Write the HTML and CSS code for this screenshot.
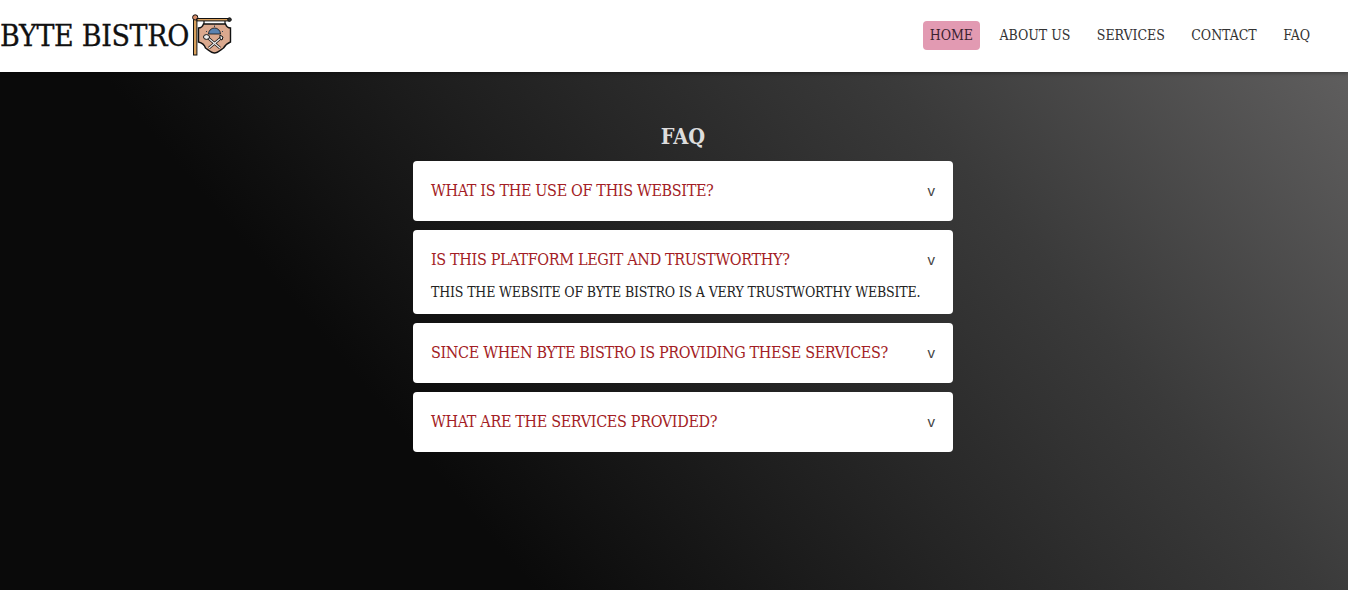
FILE: index.html
```html
<html><head>
<title>Byte Bistro - FAQ</title>
<link rel="stylesheet" href="styles.css">
</head>
<body>
<div class="navbar">
	<a class="brand" href="#">BYTE BISTRO<svg class="logo" viewBox="0 0 40 42" width="40" height="42">
		<rect x="1.5" y="2" width="3.4" height="39" fill="#d9a05b" stroke="#111" stroke-width="1"/>
		<circle cx="3.2" cy="3.4" r="2.6" fill="#d98f6b" stroke="#111" stroke-width="1"/>
		<rect x="5" y="4.500" width="32" height="2.400" fill="#d9a05b" stroke="#111" stroke-width="1"/>
		<circle cx="37.500" cy="5.600" r="1.800" fill="#333" stroke="#111" stroke-width="1"/>
		<path d="M12 7v3M33 7v3" stroke="#111" stroke-width="1.200"/>
		<path d="M6.500 14c2 0 4-1 5-4h22c1 3 3 4 5 4v14c-3 1-5 3-7 6-3 2-6 5-9 5s-6-3-9-5c-1-3-3-5-7-6z" fill="#dba98e" stroke="#111" stroke-width="1.400"/>
		<path d="M16.500 20a6 6 0 0 1 12 0z" fill="#5b83b0" stroke="#111" stroke-width=".8"/>
		<path d="M14 18l1-1M31 18l-1-1M22.500 11.500v1.500" stroke="#345" stroke-width="1"/>
		<path d="M15 23l13 11M30 23l-13 11" stroke="#111" stroke-width="2.800"/>
		<path d="M15 23l13 11M30 23l-13 11" stroke="#eee" stroke-width="1.200"/>
		<ellipse cx="14.500" cy="23" rx="3" ry="2.400" fill="#eee" stroke="#111"/>
		<path d="M28 21l3 2-1 3-2-1z" fill="#eee" stroke="#111"/>
	</svg></a>
	<ul class="menu">
		<li><a class="active" href="#">HOME</a></li>
		<li><a href="#">ABOUT US</a></li>
		<li><a href="#">SERVICES</a></li>
		<li><a href="#">CONTACT</a></li>
		<li><a href="#">FAQ</a></li>
	</ul>
</div>
<div class="hero">
	<h2>FAQ</h2>
	<div class="faq">
		<div class="item">
			<div class="question"><span>WHAT IS THE USE OF THIS WEBSITE?</span><i>v</i></div>
		</div>
		<div class="item open">
			<div class="question"><span>IS THIS PLATFORM LEGIT AND TRUSTWORTHY?</span><i>v</i></div>
			<p class="answer">THIS THE WEBSITE OF BYTE BISTRO IS A VERY TRUSTWORTHY WEBSITE.</p>
		</div>
		<div class="item">
			<div class="question"><span>SINCE WHEN BYTE BISTRO IS PROVIDING THESE SERVICES?</span><i>v</i></div>
		</div>
		<div class="item">
			<div class="question"><span>WHAT ARE THE SERVICES PROVIDED?</span><i>v</i></div>
		</div>
	</div>
</div>
</body></html>
```

FILE: styles.css
```css
html,body{margin:0;padding:0;background-color:white;}
body{font-family:"DejaVu Serif Condensed","DejaVu Serif",serif;height:591px;overflow:hidden;}
a{text-decoration:none;color:inherit;}
.navbar{height:72px;display:flex;align-items:center;justify-content:space-between;background-color:white;box-shadow:0 1px 4px rgba(0,0,0,.4);position:relative;}
.brand{display:flex;align-items:center;color:#111;font-size:30px;letter-spacing:-.35px;-webkit-text-stroke:.3px #111;height:72px;padding-bottom:2px;box-sizing:border-box;}
.logo{margin-left:3px;}
.menu{display:flex;list-style:none;margin:0;padding:0 31px 2px 0;gap:12.500px;align-items:center;}
.menu a{display:block;padding:0 7px;height:29px;line-height:28px;font-size:14px;letter-spacing:-.05px;color:#333;border-radius:4px;}
.menu a.active{background-color:#e29ab2;color:#3a2230;}
.hero{height:518px;background:linear-gradient(50deg,#0a0a0a 30%,#3a3a3a 74%,#5f5e5e 100%);display:flex;flex-direction:column;align-items:center;padding:52px 0 0 18px;box-sizing:border-box;}
h2{margin:0;height:37px;line-height:26px;font-size:21.500px;color:#ddd;}
.faq{width:540px;display:flex;flex-direction:column;gap:9px;}
.item{background-color:white;border-radius:4px;padding:0 18px;}
.question{height:60px;display:flex;align-items:center;justify-content:space-between;color:#a31d25;font-size:16px;letter-spacing:-.34px;padding-bottom:1px;box-sizing:border-box;}
.question i{font-style:normal;font-family:"Liberation Sans",sans-serif;font-size:15px;letter-spacing:0;color:#444;margin-bottom:1px;}
.open{height:84px;box-sizing:border-box;}
.answer{margin:-8px 0 0;color:#222;font-size:14px;letter-spacing:-.17px;line-height:20px;white-space:nowrap;}
```
